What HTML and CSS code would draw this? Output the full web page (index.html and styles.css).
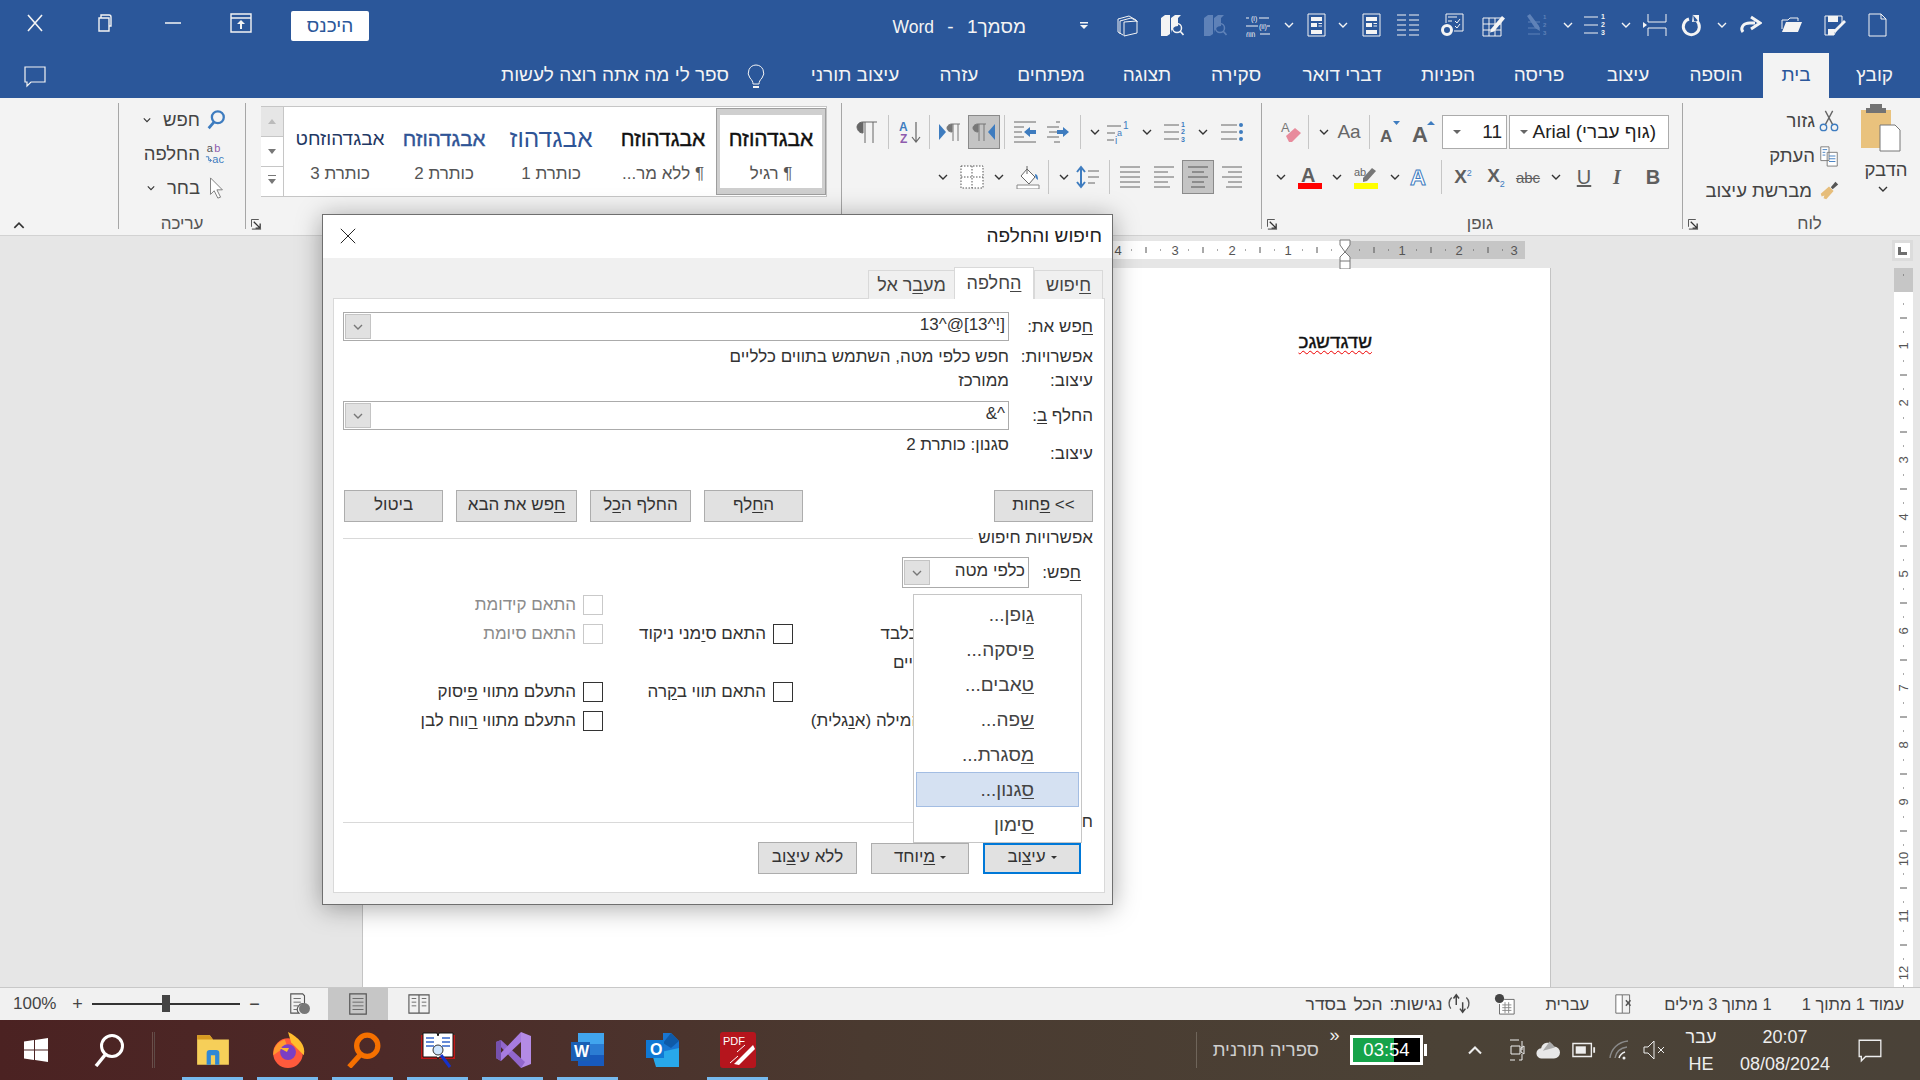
FILE: index.html
```html
<!DOCTYPE html>
<html lang="he" dir="rtl">
<head>
<meta charset="utf-8">
<title>מסמך1 - Word</title>
<link rel="stylesheet" href="styles.css">
</head>
<body>
<svg class="defs" aria-hidden="true">
<defs>
<symbol id="chev" viewBox="0 0 10 6"><path d="M1 1l4 4 4-4" fill="none" stroke="currentColor" stroke-width="1.4"/></symbol>
<symbol id="qdrop" viewBox="0 0 24 24"><path d="M8 9h8v1.5H8zM8 12h8l-4 4z" fill="currentColor"/></symbol>
<symbol id="qbook" viewBox="0 0 24 24"><g fill="none" stroke="currentColor"><path d="M2 6l11-3 7 4v1"/><path d="M4 8l11-3 6 3v1"/><path d="M2 6v13l5 3M4 8v13"/><path d="M8 9l13-1v12L8 23z"/></g></symbol>
<symbol id="qbooks" viewBox="0 0 24 24"><path d="M1 5l4-3h5v19l-3 2H1zM11 5l4-3h6l-3 3v8a7 7 0 0 0-7 7z" fill="currentColor"/><circle cx="17" cy="15" r="4.5" fill="none" stroke="currentColor" stroke-width="1.5"/><path d="M20 18l3.500 4" stroke="currentColor" stroke-width="1.600"/></symbol>
<symbol id="qroman" viewBox="0 0 24 24"><g fill="none" stroke="currentColor"><path d="M0 5h3M13 5h10M0 13h12M21 13h3M14 21h10"/></g><g fill="currentColor" font-family="Liberation Sans" font-size="7"><text x="5" y="7.500" direction="ltr">(i)</text><text x="13" y="15.500" direction="ltr">(ii)</text><text x="0" y="23.500" direction="ltr">(iii)</text></g></symbol>
<symbol id="qdoc" viewBox="0 0 24 24"><path d="M3 1h17v22H3z" fill="none" stroke="currentColor"/><path d="M6 4h11v4H6zM6 10h6v4H6zM13.500 10H17v1h-3.500zM13.500 12.500H17v1h-3.500zM6 17h11v4H6z" fill="currentColor"/></symbol>
<symbol id="qlines" viewBox="0 0 24 24"><path d="M1 2h9M13 2h10M1 7h9M13 7h10M1 12h9M13 12h10M1 17h9M13 17h10M1 22h9M13 22h10" stroke="currentColor" fill="none"/></symbol>
<symbol id="qtools" viewBox="0 0 24 24"><path d="M6 10V1h17v17H14" fill="none" stroke="currentColor"/><path d="M8 4h9M8 8h4M15 8l2 2 3-4M15 13l2 2 3-4" fill="none" stroke="currentColor"/><circle cx="7" cy="17" r="4.500" fill="none" stroke="currentColor" stroke-width="3"/></symbol>
<symbol id="qtable" viewBox="0 0 24 24"><path d="M1 5h18v18H1zM1 11h18M1 17h18M7 5v18M13 5v18" fill="none" stroke="currentColor"/><path d="M9 16l11-13 3 2.500-11 13-4 1z" fill="currentColor"/></symbol>
<symbol id="qpen" viewBox="0 0 24 24"><path d="M3 9h12M3 15h12M3 21h12" stroke="currentColor" fill="none"/><path d="M2 3l3-2 9 12 1 5-5-3z" fill="currentColor"/><g fill="currentColor" font-family="Liberation Sans" font-size="6" font-weight="700"><text x="18" y="6" direction="ltr">1</text><text x="18" y="14" direction="ltr">2</text><text x="18" y="22" direction="ltr">3</text></g></symbol>
<symbol id="qlist" viewBox="0 0 24 24"><path d="M1 4h14M1 12h14M1 20h14" stroke="currentColor" fill="none"/><g fill="currentColor" font-family="Liberation Sans" font-size="7" font-weight="700"><text x="18" y="6" direction="ltr">1</text><text x="18" y="14" direction="ltr">2</text><text x="18" y="22" direction="ltr">3</text></g></symbol>
<symbol id="qcaret" viewBox="0 0 24 24"><path d="M5 1v8h18V1M5 23v-8h18v8" fill="none" stroke="currentColor"/><path d="M0 9l4 3-4 3z" fill="currentColor"/></symbol>
<symbol id="qundo" viewBox="0 0 24 24"><path d="M9 6a8 8 0 1 0 8 2" fill="none" stroke="currentColor" stroke-width="3"/><path d="M12 9l1-8 1 7 5 0z M13 2l6 0v7z" fill="currentColor"/></symbol>
<symbol id="qredo" viewBox="0 0 24 24"><path d="M5 19c-3-4 0-9 7-9h5" fill="none" stroke="currentColor" stroke-width="3"/><path d="M13 4l9 6-9 6" fill="none" stroke="currentColor" stroke-width="3"/></symbol>
<symbol id="qfolder" viewBox="0 0 24 24"><path d="M2 19l4-10h16l-4 10z" fill="currentColor"/><path d="M2 16V7h6l2-2h8v3" fill="none" stroke="currentColor"/></symbol>
<symbol id="qsave" viewBox="0 0 24 24"><path d="M2 3h17v8l-6 7-2 4H2z" fill="none" stroke="currentColor"/><path d="M5 3h10v6H5zM5 16h7l-1 6H5z" fill="currentColor"/><path d="M11 17l10-10 2 2-10 10-3 1z" fill="currentColor"/></symbol>
<symbol id="qnew" viewBox="0 0 24 24"><path d="M4 1h12l5 5v17H4z M16 1v5h5" fill="none" stroke="currentColor"/></symbol>
<symbol id="wclose" viewBox="0 0 24 24"><path d="M5 4l14 16M19 4L5 20" stroke="currentColor" fill="none" stroke-width="1.600"/></symbol>
<symbol id="wrestore" viewBox="0 0 24 24"><path d="M7 7h10v13H7z M9 7V4h8c2 0 2 1 2 2v9h-2" fill="none" stroke="currentColor" stroke-width="1.400"/></symbol>
<symbol id="wmin" viewBox="0 0 24 24"><path d="M4 12h16" stroke="currentColor" fill="none" stroke-width="1.500"/></symbol>
<symbol id="wrib" viewBox="0 0 24 24"><path d="M2 3h20v18H2z M2 7h20" fill="none" stroke="currentColor" stroke-width="1.400"/><path d="M12 9l4 4h-3v5h-2v-5H8z" fill="currentColor"/></symbol>
<symbol id="bulb" viewBox="0 0 24 24"><path d="M12 1a8 8 0 0 0-6 13c2 2 3 4 3 6h6c0-2 1-4 3-6a8 8 0 0 0-6-13z" fill="none" stroke="currentColor"/><path d="M9 22h6v2H9z" fill="currentColor"/></symbol>
<symbol id="comment" viewBox="0 0 24 24"><path d="M2 3h20v15H8l-4 4v-4H2z" fill="none" stroke="currentColor" stroke-width="1.200"/></symbol>
<symbol id="launch" viewBox="0 0 12 12"><path d="M.5.5h8M.5.5v8" fill="none" stroke="#444"/><path d="M3 3l7 7M10 5v5H5" fill="none" stroke="#333" stroke-width="1.400"/><path d="M1 11h10" stroke="#333"/></symbol>
<symbol id="paste" viewBox="0 0 42 50"><path d="M2 7h30v38H2z" fill="#e9c27d"/><path d="M11 1h12v4h4v5H7V5h4z" fill="#737373"/><path d="M21 22h15l5 5v21H21z" fill="#fff" stroke="#777"/></symbol>
<symbol id="cut" viewBox="0 0 24 24"><path d="M8 1l8 15M16 1L8 16" stroke="#666" fill="none" stroke-width="1.500"/><circle cx="6" cy="19" r="3.500" fill="none" stroke="#3e7cbf" stroke-width="1.500"/><circle cx="18" cy="19" r="3.500" fill="none" stroke="#3e7cbf" stroke-width="1.500"/></symbol>
<symbol id="copy" viewBox="0 0 24 24"><path d="M3 2h9v15H3zM10 8h11v15H10z" fill="#fff" stroke="#777"/><path d="M5 5h5M5 8h3M5 11h3M12 12h7M12 15h7M12 18h7" stroke="#3e7cbf"/></symbol>
<symbol id="brush" viewBox="0 0 24 24"><path d="M14 8l5-6 3 3-6 5z" fill="#555"/><path d="M3 15l9-8 5 5-8 9-3-1 1-3-3 1z" fill="#e6bd7a"/></symbol>
<symbol id="eraser" viewBox="0 0 24 24"><text x="1" y="12" font-family="Liberation Sans" font-size="13" fill="#777" direction="ltr">A</text><path d="M6 16l9-8 6 5-9 9h-3z" fill="#e88b9c"/></symbol>
<symbol id="aup" viewBox="0 0 24 24"><text x="1" y="22" font-family="Liberation Sans" font-size="22" font-weight="700" fill="#5f5f5f" direction="ltr">A</text><path d="M16 5l4-4 4 4z" fill="#3e7cbf"/></symbol>
<symbol id="adown" viewBox="0 0 24 24"><text x="3" y="22" font-family="Liberation Sans" font-size="17" font-weight="700" fill="#5f5f5f" direction="ltr">A</text><path d="M16 1h7l-3.500 4z" fill="#3e7cbf"/></symbol>
<symbol id="high" viewBox="0 0 24 24"><text x="0" y="11" font-family="Liberation Sans" font-size="11" fill="#666" direction="ltr">ab</text><path d="M9 13l9-10 4 3-9 10-4 1z" fill="#777"/><path d="M0 18h24v6H0z" fill="#ff0"/></symbol>
<symbol id="ared" viewBox="0 0 24 24"><text x="3" y="17" font-family="Liberation Sans" font-size="20" font-weight="700" fill="#5f5f5f" direction="ltr">A</text><path d="M0 18h24v6H0z" fill="#f00"/></symbol>
<symbol id="aeff" viewBox="0 0 24 24"><text x="3" y="20" font-family="Liberation Sans" font-size="22" font-weight="700" fill="#fff" stroke="#3e7cbf" direction="ltr">A</text></symbol>
<symbol id="bul" viewBox="0 0 24 24"><path d="M1 5h16M1 12h16M1 19h16" stroke="#666"/><circle cx="21" cy="5" r="2" fill="#3e7cbf"/><circle cx="21" cy="12" r="2" fill="#3e7cbf"/><circle cx="21" cy="19" r="2" fill="#3e7cbf"/></symbol>
<symbol id="num" viewBox="0 0 24 24"><path d="M1 5h15M1 12h15M1 19h15" stroke="#666"/><g font-family="Liberation Sans" font-size="7" font-weight="700" fill="#3e7cbf"><text x="18" y="7" direction="ltr">1</text><text x="18" y="14" direction="ltr">2</text><text x="18" y="22" direction="ltr">3</text></g></symbol>
<symbol id="multi" viewBox="0 0 24 24"><path d="M1 6h14M1 13h8M1 20h7" stroke="#666"/><g font-family="Liberation Sans" fill="#3e7cbf"><text x="17" y="9" font-size="10" direction="ltr">1</text><text x="11" y="16" font-size="9" direction="ltr">a</text><text x="9" y="24" font-size="10" direction="ltr">i</text></g></symbol>
<symbol id="indl" viewBox="0 0 24 24"><path d="M1 2h22M1 7h10M1 12h8M1 17h10M1 22h22" stroke="#666"/><path d="M11 12l6-5v3h6v4h-6v3z" fill="#3e7cbf"/></symbol>
<symbol id="indr" viewBox="0 0 24 24"><path d="M10 2h4M1 7h12M3 12h8M1 17h12M8 22h6" stroke="#666"/><path d="M23 12l-6-5v3h-6v4h6v3z" fill="#3e7cbf"/></symbol>
<symbol id="pr" viewBox="0 0 24 24"><path d="M1 4l7 8-7 8z" fill="#3e7cbf"/><path d="M14 4h8M15 4v17M20 4v17M14 4c-4 0-5 3-5 4s1 4 5 4z" fill="#777" stroke="#777"/></symbol>
<symbol id="pl" viewBox="0 0 24 24"><path d="M23 4l-7 8 7 8z" fill="#3e7cbf"/><path d="M6 4h8M7 4v17M12 4v17M6 4c-4 0-5 3-5 4s1 4 5 4z" fill="#777" stroke="#777"/></symbol>
<symbol id="pil" viewBox="0 0 24 24"><path d="M8 2h14M10 2v21M18 2v21M8 2c-5 0-6 4-6 5s1 6 6 6z" fill="#666" stroke="#666"/></symbol>
<symbol id="sort" viewBox="0 0 24 24"><text x="1" y="11" font-family="Liberation Sans" font-size="12" font-weight="700" fill="#3e7cbf" direction="ltr">A</text><text x="2" y="23" font-family="Liberation Sans" font-size="12" font-weight="700" fill="#8e5bad" direction="ltr">Z</text><path d="M18 2v20M14 17l4 5 4-5" fill="none" stroke="#666" stroke-width="1.200"/></symbol>
<symbol id="ajust" viewBox="0 0 24 24"><path d="M2 2h20M2 7h20M2 12h20M2 17h20M2 22h20" stroke="#666" stroke-width="1"/></symbol>
<symbol id="aleft" viewBox="0 0 24 24"><path d="M2 2h20M2 7h14M2 12h20M2 17h14M2 22h16" stroke="#666" stroke-width="1"/></symbol>
<symbol id="acent" viewBox="0 0 24 24"><path d="M2 2h20M6 7h12M2 12h20M6 17h12M5 22h14" stroke="#555" stroke-width="1"/></symbol>
<symbol id="aright" viewBox="0 0 24 24"><path d="M2 2h20M8 7h14M2 12h20M8 17h14M6 22h16" stroke="#666" stroke-width="1"/></symbol>
<symbol id="space" viewBox="0 0 24 24"><path d="M5 3v18M1 7l4-5 4 5M1 17l4 5 4-5" fill="none" stroke="#3e7cbf" stroke-width="2"/><path d="M12 6h11M12 12h11M12 18h7" stroke="#666"/></symbol>
<symbol id="shade" viewBox="0 0 24 24"><path d="M11 4l8 8-6 7-8-8z" fill="#fff" stroke="#666"/><path d="M11 1v8" stroke="#666"/><path d="M19 9c2 0 3 2 3 6-2-1-3-3-3-6z" fill="#3e7cbf"/><path d="M1 20h22v4H1z" fill="#fff" stroke="#888"/></symbol>
<symbol id="bord" viewBox="0 0 24 24"><path d="M1 1h22v22H1zM1 12h22M12 1v22" fill="#fff" stroke="#555" stroke-dasharray="1.500 1.500"/></symbol>
<symbol id="find" viewBox="0 0 24 24"><circle cx="14" cy="9" r="6.500" fill="none" stroke="#3e7cbf" stroke-width="2.500"/><path d="M10 14l-6 7" stroke="#3e7cbf" stroke-width="3"/></symbol>
<symbol id="repl" viewBox="0 0 24 24"><g font-family="Liberation Sans" font-size="12" direction="ltr"><text x="2" y="10" fill="#555">a</text><text x="10" y="10" fill="#8e5bad">b</text><text x="8" y="22" fill="#3e7cbf">ac</text></g><path d="M1 15h3v4h3M5 17l2 2-2 2" fill="none" stroke="#3e7cbf"/></symbol>
<symbol id="sel" viewBox="0 0 24 24"><path d="M6 1v18l4-4 4 8 3-1-4-8h6z" fill="#fff" stroke="#777"/></symbol>
<symbol id="page" viewBox="0 0 24 24"><path d="M3 1h18v22H3z" fill="none" stroke="#555" stroke-width="1.300"/><path d="M6 6h12M6 10h12M6 14h12M6 18h12" stroke="#666"/></symbol>
<symbol id="web" viewBox="0 0 24 24"><path d="M3 1h13l2 2v9a6 6 0 0 0-6 10H3z" fill="none" stroke="#555" stroke-width="1.200"/><path d="M6 6h8M6 10h8M6 14h5M6 18h4" stroke="#666"/><circle cx="18" cy="17" r="6" fill="#777"/></symbol>
<symbol id="read" viewBox="0 0 24 24"><path d="M1 2h22v20H1zM12 2v20" fill="none" stroke="#555" stroke-width="1.200"/><path d="M4 6h5M4 10h5M4 14h5M15 6h5M15 10h5M15 14h5" stroke="#666"/></symbol>
<symbol id="access" viewBox="0 0 24 24"><path d="M4 5a9 9 0 0 0-1 12M20 5a9 9 0 0 1 1 12" fill="none" stroke="#555" stroke-width="1.500"/><path d="M9 3v10M6 6l3-4 3 4M16 20V10M13 17l3 4 3-4" fill="none" stroke="#444" stroke-width="1.600"/></symbol>
<symbol id="track" viewBox="0 0 24 24"><path d="M9 2h8v20H9" fill="none" stroke="#666"/><path d="M2 2h7v20H2z" fill="#fff" stroke="#666"/><path d="M13 8l5 6M18 8l-5 6" stroke="#555" stroke-width="1.600"/></symbol>
<symbol id="macro" viewBox="0 0 24 24"><path d="M11 7h11v16H6V12" fill="#fff" stroke="#666"/><circle cx="6" cy="6" r="5" fill="#444"/><path d="M9 13h10M9 16h10M9 19h10M12 10v12M16 10v12" stroke="#888"/></symbol>
<symbol id="win" viewBox="0 0 24 24"><path d="M0 3.500l10-1.400v9.400H0zM11 2l13-2v11.500H11zM0 12.500h10v9.400L0 20.500zM11 12.500h13V24l-13-2z" fill="#fff"/></symbol>
<symbol id="tsearch" viewBox="0 0 30 34"><circle cx="18" cy="13" r="10.500" fill="none" stroke="#fff" stroke-width="3"/><path d="M11 22L2 33" stroke="#fff" stroke-width="3.500"/></symbol>
<symbol id="texpl" viewBox="0 0 34 34"><path d="M2 3h12l3 4h15v24H2z" fill="#f6cf59"/><path d="M2 3h12l3 4H2z" fill="#d69a21"/><path d="M11 31V20a3 3 0 0 1 3-3h6a3 3 0 0 1 3 3v11h-4V22h-4v9z" fill="#2f88d6"/></symbol>
<symbol id="tff" viewBox="0 0 34 34"><circle cx="17" cy="20" r="14" fill="#ff5a3c"/><path d="M17 0c10 5 17 12 15 22L20 10z" fill="#ffbd2e"/><path d="M3 22C3 12 10 8 14 7l2 6z" fill="#ff9a2e"/><circle cx="17" cy="19" r="7.500" fill="#7b3fc4"/><path d="M9 15h9l-2 4z" fill="#ffb52e"/></symbol>
<symbol id="tmag" viewBox="0 0 34 34"><circle cx="21" cy="13" r="10" fill="none" stroke="#f57000" stroke-width="5"/><path d="M14 22L4 33" stroke="#f57000" stroke-width="5"/></symbol>
<symbol id="tbook" viewBox="0 0 36 36"><path d="M1 3h34v24H1z" fill="#c01818"/><path d="M3 1h14l1 3 1-3h14v24H19l-1 2-1-2H3z" fill="#fff" stroke="#111"/><path d="M6 6h8M6 10h8M6 14h8M22 6h8M22 10h8M22 14h8" stroke="#3566c9" stroke-width="1.500"/><circle cx="18" cy="18" r="5" fill="#cfe6ff" stroke="#333"/><path d="M21 23l9 12" stroke="#1532cc" stroke-width="3"/></symbol>
<symbol id="tvs" viewBox="0 0 36 36"><path d="M26 0l10 4v28l-10 4z" fill="#b48be5"/><path d="M1 10l5-2 24 22-4 6z" fill="#9166cc"/><path d="M1 26l25-26v10L6 29z" fill="#a77ce0"/><path d="M1 10v16l5 3V8z" fill="#7651ad"/></symbol>
<symbol id="tword" viewBox="0 0 36 36"><path d="M8 1h26v11H8z" fill="#41a5ee"/><path d="M8 12h26v11H8z" fill="#2b7cd3"/><path d="M8 23h26v11H8z" fill="#185abd"/><path d="M1 10h19v19H1z" fill="#1a5fb4"/><text x="4" y="25" font-family="Liberation Sans" font-size="16" font-weight="700" fill="#fff" direction="ltr">W</text></symbol>
<symbol id="toutl" viewBox="0 0 36 36"><path d="M18 1h8l8 8v10L18 30z" fill="#1976d2"/><path d="M26 1l8 8-8 7-8-5z" fill="#0f5aa8"/><path d="M7 22l27-6v19H11z" fill="#28a8ea"/><path d="M1 8h18v18H1z" fill="#0f78d4"/><text x="5" y="23" font-family="Liberation Sans" font-size="16" font-weight="700" fill="#fff" direction="ltr">O</text></symbol>
<symbol id="tpdf" viewBox="0 0 36 36"><rect width="36" height="36" rx="3" fill="#b5151d"/><text x="3" y="13" font-family="Liberation Sans" font-size="11" font-weight="400" fill="#fff" direction="ltr">PDF</text><path d="M14 32l19-19 2 4-16 16z" fill="#fff"/><path d="M17 20l8-7M10 31l8-7" stroke="#fff"/></symbol>
<symbol id="tmeet" viewBox="0 0 24 24"><path d="M6 2h12v20H6" fill="none" stroke="#eee" stroke-dasharray="9 4"/><path d="M7 8h9v8H7zM17 10l3-2v8l-3-2z" fill="none" stroke="#eee"/></symbol>
<symbol id="tcloud" viewBox="0 0 28 24"><path d="M7 22a6 6 0 0 1-1-12 8 8 0 0 1 15-2 7 7 0 0 1 0 14z" fill="#e8e8e8"/><path d="M8 13L16 2l6 7z" fill="#aaa"/></symbol>
<symbol id="tbatt" viewBox="0 0 26 24"><path d="M1 5h20v14H1z" fill="none" stroke="#eee" stroke-width="1.500"/><path d="M4 8h11v8H4z" fill="#eee"/><path d="M23 9h2v6h-2z" fill="#eee"/></symbol>
<symbol id="twifi" viewBox="0 0 24 24"><path d="M2 20C3 11 10 4 20 3M7 20c1-6 5-10 12-11" fill="none" stroke="#8a8a8a" stroke-width="1.400"/><path d="M11 20c1-3 3-5 6-6" fill="none" stroke="#eee" stroke-width="1.500"/><circle cx="16" cy="20" r="1.500" fill="#eee"/></symbol>
<symbol id="tvol" viewBox="0 0 24 24"><path d="M2 9h4l6-6v18l-6-6H2z" fill="none" stroke="#eee"/><path d="M16 9l6 6M22 9l-6 6" stroke="#eee"/></symbol>
</defs>
</svg>

<div class="app">
  <header class="title">
    <div class="c w46"><svg class="ic"><use href="#qnew"/></svg></div>
    <div class="c w38"><svg class="ic"><use href="#qsave"/></svg></div>
    <div class="c w48"><svg class="ic"><use href="#qfolder"/></svg></div>
    <div class="c w36"><svg class="ic"><use href="#qredo"/></svg></div>
    <div class="c w20"><svg class="ch"><use href="#chev"/></svg></div>
    <div class="c w40"><svg class="ic"><use href="#qundo"/></svg></div>
    <div class="c w34"><svg class="ic"><use href="#qcaret"/></svg></div>
    <div class="c w24"><svg class="ch"><use href="#chev"/></svg></div>
    <div class="c w38"><svg class="ic"><use href="#qlist"/></svg></div>
    <div class="c w16"><svg class="ch"><use href="#chev"/></svg></div>
    <div class="c w46 dim"><svg class="ic"><use href="#qpen"/></svg></div>
    <div class="c w40"><svg class="ic"><use href="#qtable"/></svg></div>
    <div class="c w44"><svg class="ic"><use href="#qtools"/></svg></div>
    <div class="c w44"><svg class="ic"><use href="#qlines"/></svg></div>
    <div class="c w28"><svg class="ic"><use href="#qdoc"/></svg></div>
    <div class="c w30"><svg class="ch"><use href="#chev"/></svg></div>
    <div class="c w22"><svg class="ic"><use href="#qdoc"/></svg></div>
    <div class="c w34"><svg class="ch"><use href="#chev"/></svg></div>
    <div class="c w28"><svg class="ic"><use href="#qroman"/></svg></div>
    <div class="c w58 dim"><svg class="ic"><use href="#qbooks"/></svg></div>
    <div class="c w28"><svg class="ic"><use href="#qbooks"/></svg></div>
    <div class="c w60"><svg class="ic"><use href="#qbook"/></svg></div>
    <div class="c w28"><svg class="ic"><use href="#qdrop"/></svg></div>
    <div class="doc-name">מסמך1 - <span class="wd">Word</span></div>
    <div class="win-ctrls">
      <button class="signin">היכנס</button>
      <div class="c w100"><svg class="ic"><use href="#wrib"/></svg></div>
      <div class="c w36"><svg class="ic"><use href="#wmin"/></svg></div>
      <div class="c w102"><svg class="ic"><use href="#wrestore"/></svg></div>
      <div class="c w36"><svg class="ic"><use href="#wclose"/></svg></div>
    </div>
  </header>

  <nav class="tabs">
    <div class="tab w91">קובץ</div>
    <div class="tab w66 on">בית</div>
    <div class="tab w94">הוספה</div>
    <div class="tab w82">עיצוב</div>
    <div class="tab w96">פריסה</div>
    <div class="tab w86">הפניות</div>
    <div class="tab w126">דברי דואר</div>
    <div class="tab w86">סקירה</div>
    <div class="tab w92">תצוגה</div>
    <div class="tab w100">מפתחים</div>
    <div class="tab w84">עזרה</div>
    <div class="tab w124">עיצוב תורני</div>
    <div class="c w30 bulb"><svg class="ic"><use href="#bulb"/></svg></div>
    <div class="tell">ספר לי מה אתה רוצה לעשות</div>
    <div class="c w36 comment"><svg class="ic"><use href="#comment"/></svg></div>
  </nav>

  <section class="ribbon">
    <div class="grp g-clip">
      <div class="clip-body">
        <div class="paste">
          <svg class="paste-ic"><use href="#paste"/></svg>
          <span>הדבק</span>
          <svg class="ch dk"><use href="#chev"/></svg>
        </div>
        <div class="small-col">
          <div class="sm"><svg class="ic"><use href="#cut"/></svg><span>גזור</span></div>
          <div class="sm"><svg class="ic"><use href="#copy"/></svg><span>העתק</span></div>
          <div class="sm"><svg class="ic"><use href="#brush"/></svg><span class="sm-brush">מברשת עיצוב</span></div>
        </div>
      </div>
      <div class="foot"><span class="foot-l">לוח</span><svg class="launch"><use href="#launch"/></svg></div>
    </div>

    <div class="grp g-font">
      <div class="rows">
        <div class="r r1">
          <div class="combo w160"><span class="combo-t">(גוף עברי) Arial</span><i class="tri"></i></div>
          <div class="w2"></div>
          <div class="combo w65 c-num"><span class="combo-t">11</span><i class="tri"></i></div>
          <div class="c w38"><svg class="ic"><use href="#aup"/></svg></div>
          <div class="c w30"><svg class="ic"><use href="#adown"/></svg></div>
          <div class="c w10"><i class="sep"></i></div>
          <div class="c w30 aa">Aa</div>
          <div class="c w20"><svg class="ch dk"><use href="#chev"/></svg></div>
          <div class="c w12"><i class="sep"></i></div>
          <div class="c w20"><svg class="ic"><use href="#eraser"/></svg></div>
        </div>
        <div class="r">
          <div class="c w32 fmt b">B</div>
          <div class="c w40 fmt it">I</div>
          <div class="c w26 fmt un">U</div>
          <div class="c w30"><svg class="ch dk"><use href="#chev"/></svg></div>
          <div class="c w26 fmt st">abc</div>
          <div class="c w38 fmt b x"><span>X<sub>2</sub></span></div>
          <div class="c w28 fmt b x"><span>X<sup>2</sup></span></div>
          <div class="c w16"><i class="sep"></i></div>
          <div class="c w28"><svg class="ic"><use href="#aeff"/></svg></div>
          <div class="c w20"><svg class="ch dk"><use href="#chev"/></svg></div>
          <div class="c w38"><svg class="ic"><use href="#high"/></svg></div>
          <div class="c w20"><svg class="ch dk"><use href="#chev"/></svg></div>
          <div class="c w34"><svg class="ic"><use href="#ared"/></svg></div>
          <div class="c w24"><svg class="ch dk"><use href="#chev"/></svg></div>
        </div>
      </div>
      <div class="foot"><span class="foot-l">גופן</span><svg class="launch"><use href="#launch"/></svg></div>
    </div>

    <div class="grp g-para">
      <div class="rows">
        <div class="r r1">
          <div class="c w32"><svg class="ic"><use href="#bul"/></svg></div>
          <div class="c w26"><svg class="ch dk"><use href="#chev"/></svg></div>
          <div class="c w30"><svg class="ic"><use href="#num"/></svg></div>
          <div class="c w26"><svg class="ch dk"><use href="#chev"/></svg></div>
          <div class="c w32"><svg class="ic"><use href="#multi"/></svg></div>
          <div class="c w14"><svg class="ch dk"><use href="#chev"/></svg></div>
          <div class="c w16"><i class="sep"></i></div>
          <div class="c w28"><svg class="ic"><use href="#indr"/></svg></div>
          <div class="c w38"><svg class="ic"><use href="#indl"/></svg></div>
          <div class="c w4"><i class="sep"></i></div>
          <div class="w2"></div>
          <div class="c w32 act"><svg class="ic"><use href="#pl"/></svg></div>
          <div class="c w36"><svg class="ic"><use href="#pr"/></svg></div>
          <div class="c w6"><i class="sep"></i></div>
          <div class="c w32"><svg class="ic"><use href="#sort"/></svg></div>
          <div class="c w12"><i class="sep"></i></div>
          <div class="c w30"><svg class="ic"><use href="#pil"/></svg></div>
        </div>
        <div class="r">
          <div class="c w32"><svg class="ic"><use href="#aright"/></svg></div>
          <div class="w2"></div>
          <div class="c w32 act"><svg class="ic"><use href="#acent"/></svg></div>
          <div class="c w36"><svg class="ic"><use href="#aleft"/></svg></div>
          <div class="c w32"><svg class="ic"><use href="#ajust"/></svg></div>
          <div class="c w10"><i class="sep"></i></div>
          <div class="c w32"><svg class="ic"><use href="#space"/></svg></div>
          <div class="c w16"><svg class="ch dk"><use href="#chev"/></svg></div>
          <div class="c w16"><i class="sep"></i></div>
          <div class="c w24"><svg class="ic"><use href="#shade"/></svg></div>
          <div class="c w34"><svg class="ch dk"><use href="#chev"/></svg></div>
          <div class="c w20"><svg class="ic"><use href="#bord"/></svg></div>
          <div class="c w38"><svg class="ch dk"><use href="#chev"/></svg></div>
        </div>
      </div>
    </div>

    <div class="grp g-styles">
      <div class="gallery">
        <div class="st-item w110 sel"><div class="st-in"><span class="st-t">אבגדהוזח</span><span class="st-l">¶ רגיל</span></div></div>
        <div class="st-item w106"><div class="st-in"><span class="st-t">אבגדהוזח</span><span class="st-l">¶ ללא מר...</span></div></div>
        <div class="st-item w118"><div class="st-in"><span class="st-t h1">אבגדהוז</span><span class="st-l">כותרת 1</span></div></div>
        <div class="st-item w96"><div class="st-in"><span class="st-t h2">אבגדהוזח</span><span class="st-l">כותרת 2</span></div></div>
        <div class="st-item w112"><div class="st-in"><span class="st-t h3">אבגדהוזחט</span><span class="st-l">כותרת 3</span></div></div>
        <div class="st-scroll">
          <div class="sc sc-up"><i class="sc-tri up"></i></div>
          <div class="sc"><i class="sc-tri"></i></div>
          <div class="sc"><i class="sc-tri more"></i></div>
        </div>
      </div>
      <div class="foot"><span class="foot-l"></span><svg class="launch"><use href="#launch"/></svg></div>
    </div>

    <div class="grp g-edit">
      <div class="small-col edit">
        <div class="sm"><svg class="ic"><use href="#find"/></svg><span>חפש</span><svg class="ch dk"><use href="#chev"/></svg></div>
        <div class="sm"><svg class="ic"><use href="#repl"/></svg><span>החלפה</span></div>
        <div class="sm"><svg class="ic"><use href="#sel"/></svg><span>בחר</span><svg class="ch dk"><use href="#chev"/></svg></div>
      </div>
      <div class="foot"><span class="foot-l">עריכה</span></div>
    </div>

    <div class="collapse"><svg class="ch dk up"><use href="#chev"/></svg></div>
  </section>

  <main class="main">
    <div class="docwrap">
      <div class="ruler">
        <svg class="ruler-svg" viewBox="0 0 425 18">
          <rect x="0" y="0" width="245" height="18" fill="#fff"/><rect x="245" y="0" width="180" height="18" fill="#c6c6c6"/>
          <path d="M202 9h1M231 9h1M259 9h1M288 9h1M316 9h1M345 9h1M373 9h1M402 9h1M174 9h1M145 9h1M117 9h1M88 9h1M60 9h1M31 9h1M3 9h1" stroke="#555"/>
          <path d="M217 6v6M274 6v6M331 6v6M388 6v6M160 6v6M103 6v6M46 6v6" stroke="#555"/>
          <g class="rul-t" text-anchor="middle"><text x="18" y="14">4</text><text x="75" y="14">3</text><text x="132" y="14">2</text><text x="188" y="14">1</text><text x="302" y="14">1</text><text x="359" y="14">2</text><text x="414" y="14">3</text></g>
        </svg>
        <svg class="ruler-mark" viewBox="0 0 12 30"><path d="M1 1h10v5l-5 7-5-7zM1 18l5-5 5 5v12H1z M1 22h10" fill="#fff" stroke="#777"/></svg>
      </div>
      <div class="page"><p class="page-t">שדגדשגכ</p></div>
    </div>
    <aside class="vside">
      <div class="corner"><i></i></div>
      <svg class="vruler" viewBox="0 0 19 719" preserveAspectRatio="none">
        <rect width="19" height="24" fill="#c6c6c6"/><rect y="24" width="19" height="695" fill="#fff"/>
        <path d="M9 7h1M9 36h1M9 64h1M9 93h1M9 121h1M9 150h1M9 178h1M9 207h1M9 235h1M9 264h1M9 292h1M9 321h1M9 349h1M9 378h1M9 406h1M9 435h1M9 463h1M9 492h1M9 520h1M9 549h1M9 577h1M9 606h1M9 634h1M9 663h1M9 691h1M9 718h1" stroke="#555"/>
        <path d="M6 50h7M6 107h7M6 164h7M6 221h7M6 278h7M6 335h7M6 392h7M6 449h7M6 506h7M6 563h7M6 620h7M6 677h7" stroke="#555"/>
        <g class="rul-t" text-anchor="middle">
          <text transform="translate(14 78) rotate(-90)">1</text><text transform="translate(14 135) rotate(-90)">2</text><text transform="translate(14 192) rotate(-90)">3</text><text transform="translate(14 249) rotate(-90)">4</text><text transform="translate(14 306) rotate(-90)">5</text><text transform="translate(14 363) rotate(-90)">6</text><text transform="translate(14 420) rotate(-90)">7</text><text transform="translate(14 477) rotate(-90)">8</text><text transform="translate(14 534) rotate(-90)">9</text><text transform="translate(14 591) rotate(-90)" direction="ltr">10</text><text transform="translate(14 648) rotate(-90)" direction="ltr">11</text><text transform="translate(14 705) rotate(-90)" direction="ltr">12</text>
        </g>
      </svg>
    </aside>
  </main>

  <footer class="status">
    <span class="m17">עמוד 1 מתוך 1</span>
    <span class="m31">1 מתוך 3 מילים</span>
    <svg class="ic m28"><use href="#track"/></svg>
    <span class="m25">עברית</span>
    <svg class="ic m29"><use href="#macro"/></svg>
    <svg class="ic m24"><use href="#access"/></svg>
    <span class="m6">נגישות: הכל בסדר</span>
    <div class="views">
      <svg class="ic"><use href="#read"/></svg>
      <div class="view-on"><svg class="ic"><use href="#page"/></svg></div>
      <svg class="ic"><use href="#web"/></svg>
      <div class="zoom-ctl">
        <span class="zpm">−</span>
        <div class="slider"><i></i></div>
        <span class="zpm">+</span>
      </div>
      <span class="zpct">100%</span>
    </div>
  </footer>

  <div class="taskbar" dir="ltr">
    <div class="c w72"><svg class="t-win"><use href="#win"/></svg></div>
    <div class="c w74"><svg class="t-search"><use href="#tsearch"/></svg></div>
    <div class="c w36"><i class="t-sep"></i></div>
    <div class="apps">
      <div class="app-i run"><svg class="t-app"><use href="#texpl"/></svg></div>
      <div class="app-i run"><svg class="t-app"><use href="#tff"/></svg></div>
      <div class="app-i run"><svg class="t-app"><use href="#tmag"/></svg></div>
      <div class="app-i run"><svg class="t-app"><use href="#tbook"/></svg></div>
      <div class="app-i run"><svg class="t-app"><use href="#tvs"/></svg></div>
      <div class="app-i run"><svg class="t-app"><use href="#tword"/></svg></div>
      <div class="app-i"><svg class="t-app"><use href="#toutl"/></svg></div>
      <div class="app-i run"><svg class="t-app"><use href="#tpdf"/></svg></div>
    </div>
    <div class="tray">
      <div class="t-lib" dir="rtl">ספריה תורנית</div>
      <div class="t-more">»</div>
      <div class="timer"><span class="timer-in">03:54</span></div>
      <div class="c w28 m38"><svg class="ch up-w"><use href="#chev"/></svg></div>
      <div class="c w30 m12"><svg class="ic"><use href="#tmeet"/></svg></div>
      <div class="c w34"><svg class="ic"><use href="#tcloud"/></svg></div>
      <div class="c w38"><svg class="ic"><use href="#tbatt"/></svg></div>
      <div class="c w34"><svg class="ic"><use href="#twifi"/></svg></div>
      <div class="c w34"><svg class="ic"><use href="#tvol"/></svg></div>
      <div class="t-col w60"><span dir="rtl">עבר</span><span>HE</span></div>
      <div class="t-col w108"><span>20:07</span><span>08/08/2024</span></div>
      <div class="c w62"><svg class="t-note"><use href="#comment"/></svg></div>
    </div>
  </div>
</div>

<div class="dialog">
  <div class="d-title"><span>חיפוש והחלפה</span><svg class="d-x" viewBox="0 0 20 20"><path d="M2 2l16 16M18 2L2 18" stroke="#222" fill="none" stroke-width="1.100"/></svg></div>
  <div class="d-body">
    <div class="d-tabs">
      <div class="d-tab t1"><span><u>ח</u>יפוש</span></div>
      <div class="d-tab t2 on"><span><u>ה</u>חלפה</span></div>
      <div class="d-tab t3"><span>מע<u>ב</u>ר אל</span></div>
    </div>
    <div class="panel">
      <div class="frow fr-input"><label class="lb"><u>ח</u>פש את:</label><div class="input"><span>[!^13]@^13</span><b class="ddb"><svg class="ch gr"><use href="#chev"/></svg></b></div></div>
      <div class="frow fr-t1"><label class="lb">אפשרויות:</label><span>חפש כלפי מטה, השתמש בתווים כלליים</span></div>
      <div class="frow fr-t2"><label class="lb">עיצוב:</label><span>ממורכז</span></div>
      <div class="frow fr-input fr-rep"><label class="lb">החלף <u>ב</u>:</label><div class="input"><span>^&amp;</span><b class="ddb"><svg class="ch gr"><use href="#chev"/></svg></b></div></div>
      <div class="frow fr-t3"><label class="lb">עיצוב:</label><span>סגנון: כותרת 2</span></div>
      <div class="btns">
        <button class="btn b99 b-first"><span>&gt;&gt; <u>פ</u>חות</span></button>
        <button class="btn b99"><span>ה<u>ח</u>לף</span></button>
        <button class="btn b101"><span>החלף ה<u>כ</u>ל</span></button>
        <button class="btn b121"><span><u>ח</u>פש את הבא</span></button>
        <button class="btn b99"><span>ביטול</span></button>
      </div>
      <div class="sect"><span>אפשרויות חיפוש</span><i></i></div>
      <div class="srch"><label class="lb2"><u>ח</u>פש:</label><div class="input in2"><span>כלפי מטה</span><b class="ddb"><svg class="ch gr"><use href="#chev"/></svg></b></div></div>
      <div class="opts">
        <div class="opt"></div>
        <div class="opt"></div>
        <label class="opt dis"><i class="cb"></i><span>התאם קידומת</span></label>
        <label class="opt"><i class="cb"></i><span>מצא מילים שלמות בלבד</span></label>
        <label class="opt"><i class="cb"></i><span>התאם ס<u>י</u>מני ניקוד</span></label>
        <label class="opt dis"><i class="cb"></i><span>התאם סיומת</span></label>
        <label class="opt"><i class="cb"></i><span>השתמש בתווים כלליים</span></label>
        <div class="opt"></div>
        <div class="opt"></div>
        <div class="opt"></div>
        <label class="opt"><i class="cb"></i><span>התאם תווי ב<u>ק</u>רה</span></label>
        <label class="opt"><i class="cb"></i><span>התעלם מתווי <u>פ</u>יסוק</span></label>
        <label class="opt"><i class="cb"></i><span>חפש את כל צורות המילה (א<u>נ</u>גלית)</span></label>
        <div class="opt"></div>
        <label class="opt"><i class="cb"></i><span>התעלם מתווי <u>ר</u>ווח לבן</span></label>
      </div>
      <div class="sect s2"><span>חיפוש</span><i></i></div>
      <div class="btns2">
        <button class="btn b98 focus"><i class="tr2"></i><span>עי<u>צ</u>וב</span></button>
        <button class="btn b98"><i class="tr2"></i><span><u>מ</u>יוחד</span></button>
        <button class="btn b99h"><span>ללא עי<u>צ</u>וב</span></button>
      </div>
    </div>
  </div>
  <ul class="menu">
    <li><span><u>ג</u>ופן...</span></li>
    <li><span><u>פ</u>יסקה...</span></li>
    <li><span><u>ט</u>אבים...</span></li>
    <li><span><u>ש</u>פה...</span></li>
    <li><span><u>מ</u>סגרת...</span></li>
    <li class="hot"><span><u>ס</u>גנון...</span></li>
    <li><span><u>ס</u>ימון</span></li>
  </ul>
</div>
</body>
</html>
```

FILE: styles.css
```css
*{box-sizing:border-box}
html,body{margin:0;padding:0;width:1920px;height:1080px;overflow:hidden}
body{font-family:"Liberation Sans","Noto Sans",sans-serif;font-size:15px;color:#444;position:relative}
.defs{position:absolute;width:0;height:0}
.app{display:flex;flex-direction:column;width:1920px;height:1080px}
.c{display:flex;align-items:center;justify-content:center;flex:none}
.ic{width:24px;height:24px;display:block;flex:none}
.ch{width:10px;height:6px;display:block;flex:none}
i{font-style:normal}
u{text-underline-offset:2px}

.w2{width:2px;flex:none}.w4{width:4px}.w6{width:6px}.w10{width:10px}.w12{width:12px}.w14{width:14px}.w16{width:16px}.w20{width:20px}.w22{width:22px}.w24{width:24px}.w26{width:26px}.w28{width:28px}.w30{width:30px}.w32{width:32px}.w34{width:34px}.w36{width:36px}.w38{width:38px}.w40{width:40px}.w44{width:44px}.w46{width:46px}.w48{width:48px}.w58{width:58px}.w60{width:60px}.w62{width:62px}.w65{width:65px}.w66{width:66px}.w72{width:72px}.w74{width:74px}.w82{width:82px}.w84{width:84px}.w86{width:86px}.w91{width:91px}.w92{width:92px}.w94{width:94px}.w96{width:96px}.w100{width:100px}.w102{width:102px}.w106{width:106px}.w108{width:108px}.w110{width:110px}.w112{width:112px}.w118{width:118px}.w124{width:124px}.w126{width:126px}.w160{width:160px}

.title{height:53px;background:#2b579a;color:#f4f4f4;display:flex;align-items:center;padding-right:20px;flex:none}
.dim{color:#5f82b8}
.doc-name{margin-right:44px;font-size:19px;color:#f4f4f4;white-space:nowrap;word-spacing:8px}
.wd{font-size:17.500px}
.win-ctrls{margin-right:auto;display:flex;align-items:center;padding-left:17px}
.signin{width:78px;height:30px;background:#fff;color:#2b579a;border:0;border-radius:2px;font:inherit;font-size:19px;padding:0;margin-top:-1px}
.title .c{margin-top:-3px}
.title .win-ctrls .c{margin-top:-7px}

.tabs{height:45px;background:#2b579a;color:#f4f4f4;display:flex;align-items:stretch;flex:none;font-size:19px}
.tab{display:flex;align-items:center;justify-content:center;flex:none;padding-bottom:2px;white-space:nowrap}
.tab.on{background:#f3f3f3;color:#2b579a}
.bulb{margin-right:22px}
.tell{margin-right:12px;display:flex;align-items:center;white-space:nowrap;padding-bottom:2px}
.comment{margin-right:auto;margin-left:17px}

.ribbon{height:138px;background:#f3f3f3;border-bottom:1px solid #d2d2d2;display:flex;flex:none;color:#444}
.grp{height:126px;margin-top:5px;border-left:1px solid #a6a6a6;display:flex;flex-direction:column;flex:none}
.g-clip{width:238px}.g-font{width:421px}.g-para{width:420px}.g-styles{width:596px}.g-edit{width:127px}
.foot{margin-top:auto;height:18px;display:flex;align-items:center;padding-top:8px}
.foot-l{flex:1;text-align:center;font-size:17px;color:#555}
.launch{width:11px;height:11px;margin-left:5px;flex:none}
.clip-body{display:flex}
.paste{width:60px;margin-right:10px;display:flex;flex-direction:column;align-items:center;flex:none}
.paste-ic{width:42px;height:50px;display:block}
.paste span{font-size:18.500px;margin-top:7px;line-height:20px;margin-left:12px}
.paste .ch{margin-top:6px;margin-left:6px}
.dk{color:#333}
.small-col{display:flex;flex-direction:column}
.sm{height:35px;display:flex;align-items:center;font-size:18.500px;white-space:nowrap}
.sm span{margin-right:2px}
.g-clip .sm .ic{margin-right:10px;width:22px;height:22px}
.g-clip .sm span{margin-right:3px}
.g-clip .sm .sm-brush{margin-right:6px}
.rows{padding-top:12px;padding-right:13px}
.r{display:flex;height:34px;align-items:stretch}
.r1{margin-bottom:11px}
.sep{display:block;width:1px;height:34px;background:#c6c6c6}
.combo{display:flex;align-items:center;background:#fff;border:1px solid #ababab;flex:none;padding:0 12px 0 6px;color:#222;height:34px}
.c-num{padding-right:4px}
.combo-t{white-space:nowrap;font-size:19px}
.tri{width:0;height:0;border:4px solid transparent;border-top:4px solid #666;border-bottom:0;margin-right:auto;margin-left:4px}
.aa{font-size:19px;color:#666}
.fmt{font-size:20px;color:#5f5f5f}
.b{font-weight:700}.it{font-style:italic;font-family:"Liberation Serif";font-weight:700}.un{text-decoration:underline;font-weight:400}
.st{font-size:15px;text-decoration:line-through}
.x{font-size:19px;direction:ltr}
.x sub,.x sup{font-size:9px;color:#3e7cbf;font-weight:400}
.act{background:#c4c4c4;border:1px solid #8a8a8a}
.g-styles{padding-right:14px}
.gallery{height:91px;margin-top:3px;background:#fff;border:1px solid #c6c6c6;display:flex;width:566px}
.st-item{flex:none;display:flex;padding:2px 0}
.st-item.sel{padding:2px 1px}
.st-in{flex:1;display:flex;flex-direction:column;align-items:center;padding-top:17px;overflow:hidden}
.sel .st-in{border:solid #cfcfcf;border-width:6px 3px;padding-top:11px;outline:1px solid #9e9e9e}
.st-t{font-size:21px;line-height:26px;color:#111;white-space:nowrap;height:26px;font-weight:400;-webkit-text-stroke:.4px currentColor}
.st-l{font-size:17px;color:#555;margin-top:12px;white-space:nowrap}
.h1{color:#2f5496;font-size:24.500px;-webkit-text-stroke:0}.h2{color:#2f5496;font-size:20.500px}.h3{color:#1f3864;font-size:19px;-webkit-text-stroke:0}
.st-scroll{width:23px;flex:none;display:flex;flex-direction:column;border-right:1px solid #c6c6c6}
.sc{flex:1;display:flex;align-items:center;justify-content:center;border-bottom:1px solid #c6c6c6;background:#fff}
.sc:last-child{border-bottom:0}
.sc-up{background:#e6e6e6}
.sc-tri{width:0;height:0;border:4px solid transparent;border-top:5px solid #777;border-bottom:0;position:relative}
.sc-tri.up{border-top:0;border-bottom:5px solid #bbb}
.sc-tri.more::before{content:"";position:absolute;left:-4px;top:-9px;width:8px;height:1px;background:#777}
.edit{padding-right:18px}
.edit .sm{height:34px}
.edit .ic{width:22px;height:22px}
.edit .sm span{margin-right:5px}
.edit .ch{margin-right:12px;width:8px}
.collapse{flex:1;display:flex;align-items:flex-end;justify-content:flex-end;padding:0 0 6px 13px}
.collapse .ch{transform:rotate(180deg);width:12px;height:7px}

.main{flex:1;background:#e6e6e6;display:flex;direction:ltr;min-height:0;overflow:hidden}
.docwrap{flex:1;display:flex;flex-direction:column;min-width:0}
.ruler{height:18px;margin-top:5px;margin-bottom:9px;margin-left:1100px;width:425px;position:relative;flex:none}
.ruler-svg{display:block;width:425px;height:18px}
.rul-t{font-family:"Liberation Sans";font-size:13px;fill:#555}
.ruler-mark{position:absolute;left:239px;top:-2px;width:12px;height:30px}
.page{flex:1;margin-left:362px;width:1189px;background:#fff;border:solid #c4c4c4;border-width:0 1px;padding:64px 178px 0 0;direction:rtl}
.page-t{margin:0;text-align:right;font-size:19px;font-weight:400;-webkit-text-stroke:.4px currentColor;color:#111;line-height:20px;text-decoration:underline wavy #e00;text-decoration-thickness:1px;text-underline-offset:2px;text-decoration-skip-ink:none}
.vside{width:28px;flex:none;display:flex;flex-direction:column;align-items:flex-start;padding-top:4px}
.corner{width:21px;height:21px;background:#fff;border:3px solid #dcdcdc;display:flex;align-items:flex-end;justify-content:center;padding-bottom:3px}
.corner i{width:9px;height:8px;background:linear-gradient(#6f6f6f,#6f6f6f) left/3px 8px no-repeat,linear-gradient(#6f6f6f,#6f6f6f) bottom/9px 3px no-repeat}
.vruler{width:19px;flex:1;margin-left:2px;margin-top:7px;display:block;min-height:0}

.status{height:33px;background:#f1f1f1;border-top:1px solid #c8c8c8;display:flex;align-items:center;flex:none;font-size:16.500px;color:#444;white-space:nowrap}
.status .ic{width:22px;height:22px}
.m17{margin-right:16px}.m31{margin-right:30px}.m28{margin-right:28px}.m25{margin-right:25px}.m29{margin-right:29px}.m24{margin-right:24px}
.m6{margin-right:6px;font-size:17.500px;word-spacing:2px}
.views{margin-right:auto;display:flex;align-items:center;height:100%}
.view-on{width:60px;height:100%;background:#c6c6c6;display:flex;align-items:center;justify-content:center;margin:0 20px 0 18px}
.zoom-ctl{display:flex;align-items:center;margin-right:28px;margin-left:15px;color:#444;font-size:18px}
.zpm{width:12px;text-align:center}
.slider{width:148px;height:2px;background:#333;margin:0 8px 0 9px;position:relative;flex:none}
.slider i{position:absolute;left:70px;top:-8px;width:8px;height:17px;background:#444}
.zpct{margin-left:13px;font-size:17px}

.taskbar{height:60px;flex:none;background:linear-gradient(90deg,#4b2222 0,#4d2a28 20%,#4a3a30 45%,#4b4236 75%,#4a4238 100%);display:flex;align-items:stretch;color:#e6e6e6}
.t-win{width:24px;height:24px}
.t-search{width:30px;height:34px}
.t-sep{display:block;width:3px;height:36px;border-left:1px solid #6b4f4a;border-right:1px solid #5e4a46;margin-left:-22px}
.apps{display:flex;gap:14px}
.app-i{width:61px;display:flex;align-items:center;justify-content:center;border-bottom:3px solid transparent;padding-top:3px}
.app-i.run{border-bottom-color:#76b9ed}
.t-app{width:36px;height:36px;display:block}
.tray{margin-left:auto;display:flex;align-items:center;width:724px;position:relative}
.tray::before{content:"";width:1px;height:36px;background:#6f655a;margin-right:14px;flex:none}
.t-lib{width:108px;font-size:18.500px;white-space:nowrap;color:#cfcfcf}
.t-more{width:31px;text-align:center;font-size:18px;align-self:flex-start;margin-top:6px;color:#eee;line-height:18px}
.timer{width:73px;height:30px;border:3px solid #fff;background:linear-gradient(90deg,#16a34a 0,#16a34a 61%,#000 61%);display:flex;align-items:center;justify-content:center;position:relative;flex:none}
.timer::after{content:"";position:absolute;right:-7px;top:6px;width:3px;height:12px;background:#fff}
.timer-in{color:#fff;font-size:18.500px}
.m38{margin-left:38px}.m12{margin-left:12px}
.up-w{transform:rotate(180deg);width:16px;height:9px;color:#eee}
.t-col{display:flex;flex-direction:column;align-items:center;gap:9px;font-size:18px;color:#eee;flex:none;line-height:18px}
.t-note{width:26px;height:26px;color:#eee}

.dialog{position:absolute;left:322px;top:214px;width:791px;height:691px;border:1px solid #6f6f6f;background:#f0f0f0;box-shadow:0 3px 24px rgba(0,0,0,.35);display:flex;flex-direction:column;color:#333;font-size:17px;z-index:5}
.d-title{height:43px;background:#fff;display:flex;align-items:center;justify-content:space-between;padding:0 10px 2px 16px;flex:none;color:#222;font-size:19px}
.d-x{width:18px;height:18px;display:block}
.d-body{flex:1;padding:10px 7px 11px 10px;display:flex;flex-direction:column}
.d-tabs{display:flex;height:31px;padding-right:2px;flex:none;position:relative;z-index:1;margin-bottom:-1px;font-size:18px}
.d-tab{height:29px;margin-top:2px;border:1px solid #d9d9d9;border-bottom:0;background:#f0f0f0;display:flex;align-items:center;justify-content:center;color:#444;border-right:0}
.t1{width:69px;border-right:1px solid #d9d9d9}
.t2{width:80px;background:#fff;height:32px;margin-top:-1px;border-right:1px solid #d9d9d9;border-left:1px solid #d9d9d9}
.t3{width:86px}
.panel{flex:1;background:#fff;border:1px solid #d9d9d9;padding:13px 11px 0 9px;display:flex;flex-direction:column}
.frow{display:flex;align-items:center;flex:none;white-space:nowrap}
.lb{width:84px;flex:none}
.fr-input{height:29px}
.input{flex:1;height:29px;border:1px solid #ababab;display:flex;align-items:center;padding:0 2px 0 1px;color:#333}
.input span{flex:1;padding:0 1px 3px}
.ddb{width:26px;height:25px;background:#e1e1e1;border:1px solid #c4c4c4;display:flex;align-items:center;justify-content:center;flex:none;margin-right:auto}
.gr{color:#777;width:10px;height:6px}
.fr-t1{height:20px;margin-top:6px}
.fr-t2{height:20px;margin-top:4px}
.fr-rep{margin-top:10px}
.fr-t3{height:30px;margin-top:5px;align-items:flex-start}
.fr-t3 .lb{margin-top:9px}
.btns{display:flex;gap:13px;margin-top:25px;flex:none;padding-left:1px}
.btn{height:32px;background:#e1e1e1;border:1px solid #adadad;font:inherit;color:#333;padding:0 0 2px;display:flex;align-items:center;justify-content:center;flex:none;white-space:nowrap}
.b99{width:99px}.b101{width:101px}.b121{width:121px}.b98{width:98px;height:31px}
.b99h{width:99px}
.b-first{margin-left:auto}
.sect{display:flex;align-items:center;height:20px;margin-top:6px;flex:none;gap:5px;white-space:nowrap}
.sect i{flex:1;height:1px;background:#d9d9d9}
.srch{display:flex;align-items:center;margin-top:9px;height:31px;padding-right:12px;flex:none}
.lb2{width:52px;flex:none}
.in2{flex:none;width:127px;height:31px}
.opts{display:grid;grid-template-columns:288px 190px 1fr;grid-auto-rows:20px;row-gap:9px;margin-top:7px;padding-right:12px;flex:none;white-space:nowrap}
.opt{display:flex;align-items:center;gap:7px;color:#333}
.cb{width:20px;height:20px;border:1px solid #333;background:#fff;flex:none}
.dis{color:#8c8c8c}.dis .cb{border-color:#c9c9c9}
.s2{margin-top:81px}
.btns2{display:flex;gap:14px;margin-top:10px;padding-right:12px;flex:none;align-items:center}
.tr2{width:0;height:0;border:3px solid transparent;border-top:3px solid #333;border-bottom:0;margin-left:5px}
.focus{border:2px solid #0078d7}
.menu{position:absolute;left:590px;top:379px;width:169px;height:249px;margin:0;padding:2px;list-style:none;background:#fff;border:1px solid #c6c6c6;color:#444;z-index:6;font-size:19px}
.menu li{height:35px;display:flex;align-items:center;padding-right:44px;border:1px solid transparent}
.menu .hot{background:#d5e1f2;border-color:#a3bde3}
```
